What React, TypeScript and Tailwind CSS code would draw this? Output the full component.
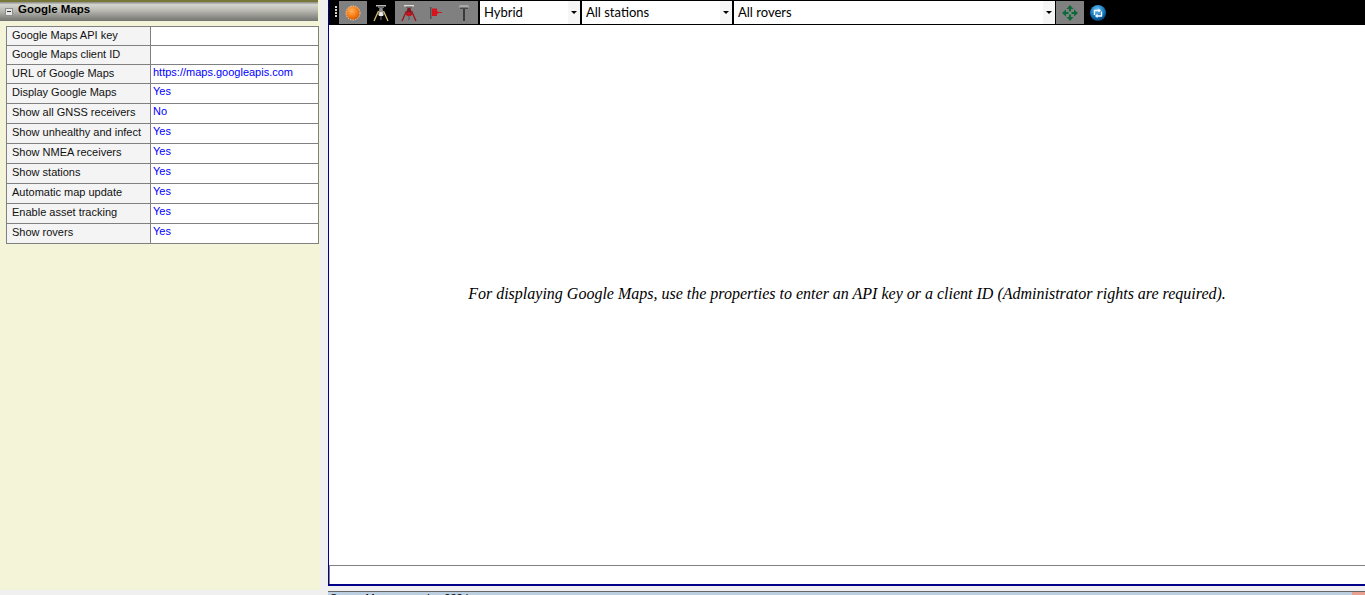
const rows = [
  { label: "Google Maps API key", value: "", height: "h-[19px]" },
  { label: "Google Maps client ID", value: "", height: "h-[19px]" },
  { label: "URL of Google Maps", value: "https://maps.googleapis.com", height: "h-[19px]" },
  { label: "Display Google Maps", value: "Yes", height: "h-[20px]" },
  { label: "Show all GNSS receivers", value: "No", height: "h-[20px]" },
  { label: "Show unhealthy and infect", value: "Yes", height: "h-[20px]" },
  { label: "Show NMEA receivers", value: "Yes", height: "h-[20px]" },
  { label: "Show stations", value: "Yes", height: "h-[20px]" },
  { label: "Automatic map update", value: "Yes", height: "h-[20px]" },
  { label: "Enable asset tracking", value: "Yes", height: "h-[20px]" },
  { label: "Show rovers", value: "Yes", height: "h-[20px]" },
];

function Sidebar() {
  return (
    <aside className="flex h-[590px] w-[320px] shrink-0 flex-col bg-[#f4f4d9]">
      <div className="h-[2px] w-[318px] bg-[#77773a]" />
      <div className="flex h-[19px] w-[318px] items-center bg-[linear-gradient(180deg,#8a8a84,#d6d6d0_14%,#b9b9b2_45%,#737370)] pl-[5px]">
        <div className="flex h-[8px] w-[8px] items-center justify-center border border-[#8f8f8f] bg-[#e6e6e6]">
          <div className="h-px w-[4px] bg-[#333333]" />
        </div>
        <span className="mb-[3px] ml-[5px] font-['Liberation_Sans',sans-serif] text-[11.5px] font-bold leading-none text-black">
          Google Maps
        </span>
      </div>
      <div className="ml-[6px] mt-[5px] w-[313px] border-x border-t border-[#808080] bg-white font-['Liberation_Sans',sans-serif] text-[11px]">
        {rows.map((row) => (
          <div className={`flex border-b border-[#808080] ${row.height}`} key={row.label}>
            <div className="flex w-[144px] shrink-0 items-center border-r border-[#808080] bg-[#f4f4f4] pb-[2px] pl-[5px] text-[#111111]">
              <span className="whitespace-nowrap">{row.label}</span>
            </div>
            <div className="pl-[2px] leading-[15px] text-[#0000ff]">{row.value}</div>
          </div>
        ))}
      </div>
    </aside>
  );
}

function OrangeBall() {
  return (
    <svg width="16" height="16" viewBox="0 0 16 16">
      <defs>
        <radialGradient id="orange" cx="0.4" cy="0.35" r="0.7">
          <stop offset="0" stopColor="#ffb25a" />
          <stop offset="0.6" stopColor="#f47a12" />
          <stop offset="1" stopColor="#c85a08" />
        </radialGradient>
      </defs>
      <circle cx="8" cy="8" r="7" fill="url(#orange)" stroke="#f1e3d2" strokeWidth="0.8" strokeDasharray="1.5 1" />
    </svg>
  );
}

function Tripod({ cap, body, core, leg }: { cap: string; body: string; core: string; leg: string }) {
  return (
    <svg width="18" height="18" viewBox="0 0 18 18">
      <rect x="4" y="1" width="10" height="1.5" fill={cap} />
      <rect x="6" y="2.5" width="6" height="1.5" fill="#6a6a6a" />
      <path d="M7.5 4h3l1.5 7H6z" fill={body} />
      <path d="M7.5 8h3l.8 4H6.7z" fill={core} />
      <path d="M6.5 7 2 17M11.5 7l4.5 10" stroke={leg} strokeWidth="1.3" fill="none" />
      <path d="M9 12v4" stroke="#5a5a5a" strokeWidth="1.2" />
    </svg>
  );
}

function Flag() {
  return (
    <svg width="14" height="14" viewBox="0 0 14 14">
      <rect x="1" y="1" width="1.5" height="12" fill="#505050" />
      <path d="M3 2.5h5v2.5l1.5 1H13v1H9.5L8 8v2H3z" fill="#d8141c" />
    </svg>
  );
}

function Pole() {
  return (
    <svg width="12" height="18" viewBox="0 0 12 18">
      <rect x="1" y="1" width="10" height="3" rx="1.5" fill="#a9a9a9" />
      <rect x="2" y="3.5" width="8" height="1.5" fill="#4a4a4a" />
      <rect x="5" y="5" width="2" height="12" fill="#3a3a3a" />
    </svg>
  );
}

function MoveIcon() {
  return (
    <svg width="16" height="16" viewBox="0 0 16 16" fill="#0a6a38">
      <path d="M8 0l3.5 4H9v2.5H7V4H4.5z" />
      <path d="M8 16l3.5-4H9V9.5H7V12H4.5z" />
      <path d="M0 8l4-3.5V7h2.5v2H4v2.5z" />
      <path d="M16 8l-4-3.5V7H9.5v2H12v2.5z" />
      <rect x="7" y="7" width="2" height="2" fill="#6a9f86" />
    </svg>
  );
}

function RefreshIcon() {
  return (
    <svg width="16" height="16" viewBox="0 0 16 16">
      <defs>
        <radialGradient id="blue" cx="0.45" cy="0.3" r="0.75">
          <stop offset="0" stopColor="#6cc4f2" />
          <stop offset="0.65" stopColor="#0d6fb5" />
          <stop offset="1" stopColor="#052f58" />
        </radialGradient>
      </defs>
      <circle cx="8" cy="8" r="8" fill="url(#blue)" />
      <path d="M4.5 10V5.5H9M11.5 6.5V11H7" stroke="#ffffff" strokeWidth="1.4" fill="none" />
      <path d="M8.5 3.5l2.5 2-2.5 2zM7.5 8.5 5 11l2.5 2z" fill="#ffffff" />
    </svg>
  );
}

function Combo({ label, width }: { label: string; width: string }) {
  return (
    <div className={`flex h-[23px] items-center justify-between bg-white pl-[4px] ${width}`}>
      <span className="font-['Lato',sans-serif] text-[13px] leading-none text-black">{label}</span>
      <div className="flex h-full w-[12px] items-center justify-center bg-[#f6f6f6]">
        <div className="h-0 w-0 border-x-[3px] border-t-[3px] border-x-transparent border-t-black" />
      </div>
    </div>
  );
}

function Toolbar() {
  return (
    <div className="flex h-[25px] shrink-0 items-start bg-black pt-px">
      <div className="mt-[5px] flex w-[10px] flex-col items-center gap-px pl-[4px]">
        <div className="h-[2px] w-[2px] bg-[#d8d8d8]" />
        <div className="h-[2px] w-[2px] bg-[#d8d8d8]" />
        <div className="h-[2px] w-[2px] bg-[#d8d8d8]" />
        <div className="h-[2px] w-[2px] bg-[#d8d8d8]" />
      </div>
      <div className="flex h-[23px] w-[28px] items-center justify-center bg-[#808080]">
        <OrangeBall />
      </div>
      <div className="flex h-[23px] w-[27px] items-center justify-center">
        <Tripod cap="#b8b8b8" body="#8a8a8a" core="#e8e8e8" leg="#d8c070" />
      </div>
      <div className="ml-px flex h-[23px] w-[83px] items-center bg-[#808080]">
        <div className="flex w-[27px] justify-center">
          <Tripod cap="#e8d8d8" body="#7a1a22" core="#d0101c" leg="#a01018" />
        </div>
        <div className="flex w-[28px] justify-center">
          <Flag />
        </div>
        <div className="flex w-[28px] justify-center">
          <Pole />
        </div>
      </div>
      <div className="ml-[2px] flex gap-[2px]">
        <Combo label="Hybrid" width="w-[100px]" />
        <Combo label="All stations" width="w-[150px]" />
        <Combo label="All rovers" width="w-[321px]" />
      </div>
      <div className="ml-px flex h-[23px] w-[28px] items-center justify-center bg-[#808080]">
        <MoveIcon />
      </div>
      <div className="ml-[6px] flex h-[23px] w-[16px] items-center">
        <RefreshIcon />
      </div>
    </div>
  );
}

export default function App() {
  return (
    <div className="flex h-[595px] w-[1365px] overflow-hidden bg-[#f0f0f0]">
      <Sidebar />
      <main className="ml-[8px] flex h-[595px] w-[1037px] flex-col">
        <div className="flex h-[586px] shrink-0 flex-col border-b-2 border-l border-[#00008b] bg-white">
          <Toolbar />
          <div className="flex flex-1 items-center justify-center pb-[2px] font-['Liberation_Serif',serif] text-[16px] italic text-black">
            For displaying Google Maps, use the properties to enter an API key or a client ID (Administrator rights are required).
          </div>
          <div className="h-[19px] shrink-0 border-l border-t border-[#808080]" />
        </div>
        <div className="mt-[5px] flex h-[4px] shrink-0 justify-between overflow-hidden border-t border-[#666666] bg-[#bccfe0] pl-[2px] font-['Liberation_Sans',sans-serif] text-[11px] leading-[13px] text-black">
          <span className="whitespace-nowrap">Server Messages: size 232 k</span>
          <div className="h-full w-[13px] bg-[#e8a090]" />
        </div>
      </main>
    </div>
  );
}
